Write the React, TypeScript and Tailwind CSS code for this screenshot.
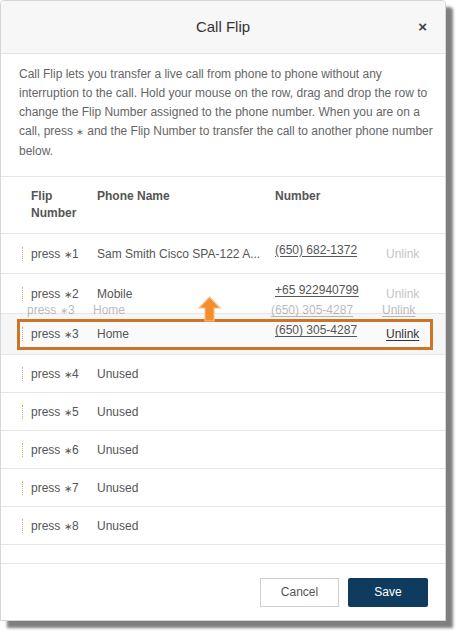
const rows = [
  { key: 1, name: "Sam Smith Cisco SPA-122 A...", number: "(650) 682-1372", unlink: "disabled" },
  { key: 2, name: "Mobile", number: "+65 922940799", unlink: "disabled" },
];

const unused = [4, 5, 6, 7, 8];

function Handle() {
  return <span className="block h-[14px] w-[9px] shrink-0 border-l border-dotted border-[#d8a878]" />;
}

function Press({ n }: { n: number }) {
  return (
    <span className="w-[66px] shrink-0 whitespace-nowrap">
      press <span className="font-['DejaVu_Sans',sans-serif] text-[10px]">∗</span>
      {n}
    </span>
  );
}

function RowCells({
  n,
  name,
  number,
  unlink,
}: {
  n: number;
  name: string;
  number?: string;
  unlink?: "disabled" | "active";
}) {
  return (
    <>
      <Handle />
      <Press n={n} />
      <span className="w-[178px] shrink-0 whitespace-nowrap overflow-hidden">{name}</span>
      <span className="w-[111px] shrink-0 pb-[8px]">
        {number && <span className="underline underline-offset-2">{number}</span>}
      </span>
      {unlink === "disabled" && <span className="text-[#c4c4c4]">Unlink</span>}
      {unlink === "active" && <span className="text-[#333] underline underline-offset-2">Unlink</span>}
    </>
  );
}

export default function App() {
  return (
    <div className="min-h-[634px] w-[459px] bg-white font-['Liberation_Sans',Arial,sans-serif]">
      <div className="w-[446px] rounded-t-[4px] border border-[#d6d6d6] bg-white shadow-[7px_7px_3px_rgba(0,0,0,0.5)]">
        {/* header */}
        <div className="relative flex h-[53px] items-center justify-center rounded-t-[4px] border-b border-[#e3e3e3] bg-[#f7f7f7]">
          <span className="text-[15px] text-[#333]">Call Flip</span>
          <span className="absolute right-[18px] top-[15px] text-[15px] font-bold text-[#444]">×</span>
        </div>

        {/* description */}
        <p className="pb-[15px] pl-[18px] pr-[10px] pt-[11px] text-[12px] leading-[19px] text-[#666]">
          Call Flip lets you transfer a live call from phone to phone without any interruption to the call. Hold your
          mouse on the row, drag and drop the row to change the Flip Number assigned to the phone number. When you are
          on a call, press <span className="font-['DejaVu_Sans',sans-serif] text-[9px]">∗</span> and the Flip Number to
          transfer the call to another phone number below.
        </p>

        {/* table */}
        <div className="relative border-t border-[#e6e6e6] text-[12px] text-[#555]">
          <div className="flex h-[57px] items-start border-b border-[#e6e6e6] pl-[30px] pt-[11px] font-bold leading-[17px]">
            <span className="w-[66px]">
              Flip
              <br />
              Number
            </span>
            <span className="w-[178px]">Phone Name</span>
            <span>Number</span>
          </div>

          {rows.map((r) => (
            <div key={r.key} className="flex h-[40px] items-center border-b border-[#e6e6e6] pl-[21px]">
              <RowCells n={r.key} name={r.name} number={r.number} unlink={r.unlink as "disabled"} />
            </div>
          ))}

          {/* drop placeholder */}
          <div className="flex h-[41px] items-center border-b border-[#e6e6e6] bg-[#f6f6f6] pl-[16px] pr-[12px]">
            <div className="flex h-[31px] flex-1 items-center border-[3px] border-[#cc7428] bg-[#fafafa] pl-[2px]">
              <RowCells n={3} name="Home" number="(650) 305-4287" unlink="active" />
            </div>
          </div>

          {unused.map((n) => (
            <div key={n} className="flex h-[38px] items-center border-b border-[#e6e6e6] pl-[21px]">
              <RowCells n={n} name="Unused" />
            </div>
          ))}

          <div className="h-[18px]" />

          {/* drag ghost */}
          <div className="pointer-events-none absolute left-[17px] top-[124px] flex h-[18px] w-[410px] items-center text-[#555] opacity-40">
            <span className="w-[9px]" />
            <Press n={3} />
            <span className="w-[178px] shrink-0">Home</span>
            <span className="w-[111px] shrink-0 underline underline-offset-2">(650) 305-4287</span>
            <span className="underline underline-offset-2">Unlink</span>
          </div>

          {/* drag arrow */}
          <svg
            className="pointer-events-none absolute left-[196px] top-[119px]"
            width="25"
            height="26"
            viewBox="0 0 25 26"
          >
            <path d="M12.5 1 L23 12 L17 12 L17 25 L8 25 L8 12 L2 12 Z" fill="#f28f2c" stroke="#f7c08a" strokeWidth="1.2" />
          </svg>
        </div>

        {/* footer */}
        <div className="flex h-[57px] items-center justify-end gap-[9px] border-t border-[#e6e6e6] pr-[17px]">
          <button className="h-[29px] w-[79px] border border-[#cfcfcf] bg-white text-[12px] text-[#555]">Cancel</button>
          <button className="h-[29px] w-[80px] rounded-[2px] bg-[#0f3c5e] text-[12px] text-white">Save</button>
        </div>
      </div>
    </div>
  );
}
